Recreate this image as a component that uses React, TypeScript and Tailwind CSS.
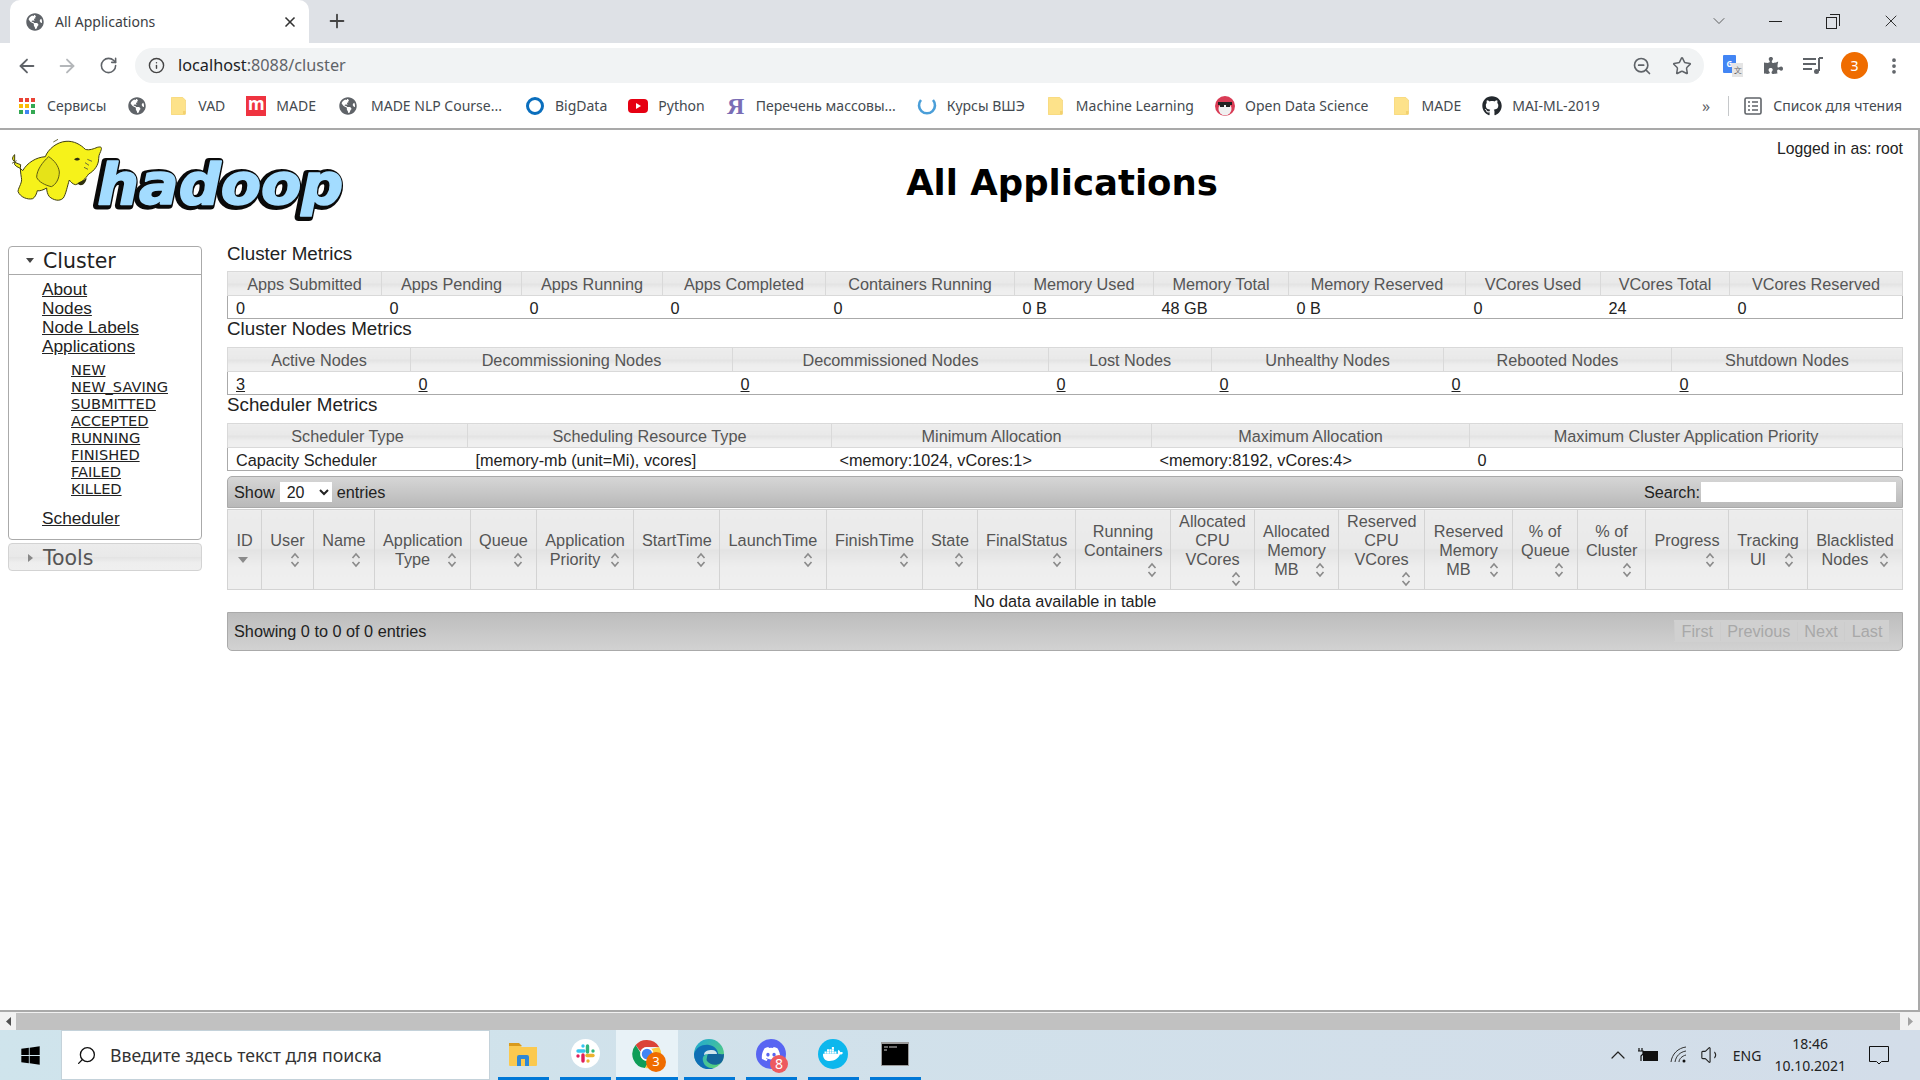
import { ReactNode } from "react";
import {
  ArrowLeft,
  ArrowRight,
  ChevronDown,
  ChevronUp,
  Info,
  MoreVertical,
  Plus,
  RotateCw,
  Search,
  Star,
  Volume1,
  X,
  ZoomOut,
} from "lucide-react";
import { FaDiscord, FaDocker, FaGithub, FaGlobeAmericas, FaPuzzlePiece, FaWindows } from "react-icons/fa";

interface MetricCol {
  label: string;
  width: string;
  value: string;
  link?: boolean;
}

interface SortCol {
  label: string;
  width: string;
  active?: boolean;
}

const clusterMetrics: MetricCol[] = [
  { label: "Apps Submitted", width: "w-[154px]", value: "0" },
  { label: "Apps Pending", width: "w-[140px]", value: "0" },
  { label: "Apps Running", width: "w-[141px]", value: "0" },
  { label: "Apps Completed", width: "w-[163px]", value: "0" },
  { label: "Containers Running", width: "w-[189px]", value: "0" },
  { label: "Memory Used", width: "w-[139px]", value: "0 B" },
  { label: "Memory Total", width: "w-[135px]", value: "48 GB" },
  { label: "Memory Reserved", width: "w-[177px]", value: "0 B" },
  { label: "VCores Used", width: "w-[135px]", value: "0" },
  { label: "VCores Total", width: "w-[129px]", value: "24" },
  { label: "VCores Reserved", width: "w-[173px]", value: "0" },
];

const nodeMetrics: MetricCol[] = [
  { label: "Active Nodes", width: "w-[183px]", value: "3", link: true },
  { label: "Decommissioning Nodes", width: "w-[322px]", value: "0", link: true },
  { label: "Decommissioned Nodes", width: "w-[316px]", value: "0", link: true },
  { label: "Lost Nodes", width: "w-[163px]", value: "0", link: true },
  { label: "Unhealthy Nodes", width: "w-[232px]", value: "0", link: true },
  { label: "Rebooted Nodes", width: "w-[228px]", value: "0", link: true },
  { label: "Shutdown Nodes", width: "w-[231px]", value: "0", link: true },
];

const schedulerMetrics: MetricCol[] = [
  { label: "Scheduler Type", width: "w-[240px]", value: "Capacity Scheduler" },
  { label: "Scheduling Resource Type", width: "w-[364px]", value: "[memory-mb (unit=Mi), vcores]" },
  { label: "Minimum Allocation", width: "w-[320px]", value: "<memory:1024, vCores:1>" },
  { label: "Maximum Allocation", width: "w-[318px]", value: "<memory:8192, vCores:4>" },
  { label: "Maximum Cluster Application Priority", width: "w-[433px]", value: "0" },
];

const appCols: SortCol[] = [
  { label: "ID", width: "w-[34px]", active: true },
  { label: "User", width: "w-[52px]" },
  { label: "Name", width: "w-[61px]" },
  { label: "Application Type", width: "w-[96px]" },
  { label: "Queue", width: "w-[66px]" },
  { label: "Application Priority", width: "w-[97px]" },
  { label: "StartTime", width: "w-[86px]" },
  { label: "LaunchTime", width: "w-[107px]" },
  { label: "FinishTime", width: "w-[96px]" },
  { label: "State", width: "w-[55px]" },
  { label: "FinalStatus", width: "w-[98px]" },
  { label: "Running Containers", width: "w-[95px]" },
  { label: "Allocated CPU VCores", width: "w-[84px]" },
  { label: "Allocated Memory MB", width: "w-[84px]" },
  { label: "Reserved CPU VCores", width: "w-[86px]" },
  { label: "Reserved Memory MB", width: "w-[88px]" },
  { label: "% of Queue", width: "w-[65px]" },
  { label: "% of Cluster", width: "w-[68px]" },
  { label: "Progress", width: "w-[83px]" },
  { label: "Tracking UI", width: "w-[79px]" },
  { label: "Blacklisted Nodes", width: "w-[95px]" },
];

const thBg =
  "bg-[linear-gradient(#ececec_0%,#e9e9e9_48%,#e3e3e3_50%,#eeeeee_72%,#efefef_100%)]";

function Folder() {
  return (
    <svg width="15" height="18" viewBox="0 0 15 18" className="shrink-0">
      <path d="M1.5 0h9.5l3.5 3v13.5a1.5 1.5 0 0 1-1.5 1.5h-11.5a1.5 1.5 0 0 1-1.5-1.5v-15a1.5 1.5 0 0 1 1.5-1.5z" fill="#fde28a" stroke="#f0cf6c" strokeWidth="0.6" />
      <path d="M12 14h2.5v3h-2.5z" fill="#f3d16e" />
    </svg>
  );
}

function Globe() {
  return <FaGlobeAmericas size={18} className="shrink-0 text-[#5f6368]" />;
}

function AppsGrid() {
  const colors = ["#ea4335", "#ea4335", "#ea4335", "#fbbc04", "#fbbc04", "#34a853", "#34a853", "#4285f4", "#34a853"];
  return (
    <div className="grid shrink-0 grid-cols-3 gap-[2px]">
      {colors.map((c, i) => (
        <svg key={i} width="4" height="4" className="block">
          <rect width="4" height="4" fill={c} />
        </svg>
      ))}
    </div>
  );
}

function Bookmark({ icon, label, className, labelClass }: { icon: ReactNode; label?: string; className?: string; labelClass?: string }) {
  return (
    <div className={`flex shrink-0 items-center ${className ?? ""}`}>
      <div className="flex w-[20px] items-center justify-center">{icon}</div>
      {label && <span className={`whitespace-nowrap ${labelClass ?? "ml-[10px]"}`}>{label}</span>}
    </div>
  );
}

function HadoopLogo() {
  const letters = {
    x: 292,
    y: 222,
    textLength: 738,
    lengthAdjust: "spacingAndGlyphs" as const,
    fontFamily: "'DejaVu Sans', sans-serif",
    fontWeight: 700,
    fontStyle: "italic",
    fontSize: 172,
    strokeLinejoin: "round" as const,
  };
  return (
    <svg width="360" height="100" viewBox="0 0 1080 300" className="block">
      <text {...letters} x={286} y={226} fill="#0a0a0a" stroke="#0a0a0a" strokeWidth="24">
        hadoop
      </text>
      <text {...letters} fill="#a3dcff" stroke="#a3dcff" strokeWidth="5">
        hadoop
      </text>
      <path
        d="M44 104c8 10 18 8 24 18 14-24 40-40 68-42 8-22 34-44 62-46 24-2 44 10 58 24 12 4 26-2 36-6 8-2 14-2 12 6-2 10-8 14-8 28 0 18-12 36-30 46-10 14-22 28-40 32-8-2-14-8-18-14-6 18-10 42-18 54-12 12-30 6-42-4-6-8-8-18-8-26-10 6-22 10-28 8-2 8-6 20-14 24-14 4-38-4-44-22 2-14 14-26 10-42-2-12-4-26-2-38-10-4-20-6-24-16-2-4 4-14 6-14z"
        fill="#f6f21a"
        stroke="#3e3d12"
        strokeWidth="3"
      />
      <path d="M146 80c-18 16-36 40-36 62 6 14 26 24 44 28 14-6 24-24 24-44-2-18-14-34-32-46z" fill="#e6e318" stroke="#5e5c15" strokeWidth="3" />
      <path d="M222 88c6-6 14-6 18 0-4 4-12 6-18 0zM232 160c8-6 18-8 28-16-2 16-16 30-28 16z" fill="#30300e" />
      <path d="M255 98l12 8M262 88l14 6M252 112l12 6M160 36l14-8M36 100l14-8" stroke="#6a6a3a" strokeWidth="3" fill="none" />
    </svg>
  );
}

function SortIcon({ active }: { active?: boolean }) {
  return (
    <span className="float-right flex h-[20px] w-[20px] items-center justify-center">
      {active ? (
        <svg width="10" height="6" viewBox="0 0 10 6">
          <path d="M0 0h10L5 6z" fill="#8a8a8a" />
        </svg>
      ) : (
        <svg width="10" height="16" viewBox="0 0 10 16" fill="none" stroke="#8a8a8a" strokeWidth="1.6">
          <path d="M1.5 6L5 2l3.5 4M1.5 10L5 14l3.5-4" />
        </svg>
      )}
    </span>
  );
}

function MetricsTable({ cols }: { cols: MetricCol[] }) {
  return (
    <table className="w-full table-fixed border-collapse">
      <colgroup>
        {cols.map((col) => (
          <col key={col.label} className={col.width} />
        ))}
      </colgroup>
      <thead>
        <tr>
          {cols.map((col) => (
            <th
              key={col.label}
              className={`h-[24px] border border-[#d9d9d9] px-0 pb-0 pt-[2px] text-center font-normal text-[#555555] ${thBg}`}
            >
              {col.label}
            </th>
          ))}
        </tr>
      </thead>
      <tbody>
        <tr>
          {cols.map((col, i) => (
            <td
              key={col.label}
              className={`h-[23px] border-b border-b-[#aaaaaa] px-2 pb-0 pt-[3px] ${i === 0 ? "border-l border-l-[#aaaaaa]" : ""} ${i === cols.length - 1 ? "border-r border-r-[#aaaaaa]" : ""}`}
            >
              {col.link ? <a className="underline">{col.value}</a> : col.value}
            </td>
          ))}
        </tr>
      </tbody>
    </table>
  );
}

function ChromeBar() {
  return (
    <div className="font-['Noto_Sans',sans-serif] text-[#3c4043]">
      <div className="flex h-[43px] items-end bg-[#dee1e6]">
        <div className="ml-[10px] flex h-[43px] w-[299px] items-center rounded-t-[10px] bg-white pl-[16px] text-[14px]">
          <FaGlobeAmericas size={18} className="text-[#5f6368]" />
          <span className="ml-[11px] flex-1">All Applications</span>
          <X size={16} strokeWidth={2.5} className="mr-[11px] text-[#333333]" />
        </div>
        <div className="mb-[11px] ml-[17px] text-[#444444]">
          <Plus size={22} strokeWidth={2} />
        </div>
        <div className="mb-[12px] ml-auto flex items-center text-[#444444]">
          <ChevronDown size={20} strokeWidth={1} className="mr-[40px]" />
          <div className="mr-[44px] h-px w-[13px] bg-[#222222]" />
          <div className="relative mr-[41px] h-[15px] w-[14px]">
            <div className="absolute bottom-0 left-0 h-[12px] w-[11px] border-[1.5px] border-[#222222]" />
            <div className="absolute right-0 top-0 h-[12px] w-[10px] border-r-[1.5px] border-t-[1.5px] border-[#222222]" />
          </div>
          <X size={20} strokeWidth={1.1} className="mr-[19px] text-[#222222]" />
        </div>
      </div>
      <div className="flex h-[45px] items-center bg-white">
        <ArrowLeft size={22} strokeWidth={2} className="ml-[16px] text-[#5f6368]" />
        <ArrowRight size={22} strokeWidth={2} className="ml-[18px] text-[#b4b7ba]" />
        <RotateCw size={19} strokeWidth={2} className="ml-[21px] text-[#5f6368]" />
        <div className="ml-[17px] flex h-[35px] w-[1569px] items-center rounded-full bg-[#f1f3f4] pl-[13px] pr-[10px]">
          <Info size={17} strokeWidth={2} className="text-[#444444]" />
          <span className="ml-[13px] text-[16.25px] text-[#202124]">
            localhost<span className="text-[#5f6368]">:8088/cluster</span>
          </span>
          <ZoomOut size={20} strokeWidth={2} className="ml-auto mr-[20px] text-[#5f6368]" />
          <Star size={20} strokeWidth={1.8} className="mr-[2px] text-[#5f6368]" />
        </div>
        <div className="relative ml-[19px] h-[22px] w-[20px]">
          <div className="absolute left-0 top-0 flex h-[18px] w-[13px] items-center justify-center rounded-[1px] bg-[#4285f4] text-[8px] font-bold text-white">
            G
          </div>
          <div className="absolute bottom-0 right-0 flex h-[14px] w-[11px] items-center justify-center bg-[#e5e5e5] text-[8px] text-[#666666]">
            文
          </div>
        </div>
        <FaPuzzlePiece size={19} className="ml-[21px] text-[#5f6368]" />
        <svg width="22" height="20" viewBox="0 0 22 20" className="ml-[19px]" fill="none" stroke="#5f6368" strokeWidth="2">
          <path d="M1 3h13M1 8h13M1 13h9M17 2v13" />
          <circle cx="14.5" cy="15.5" r="2.5" fill="#5f6368" stroke="none" />
          <path d="M17 2h4" />
        </svg>
        <div className="ml-[17px] flex h-[27px] w-[27px] items-center justify-center rounded-full bg-[#ef6c00] text-[14px] text-white">
          З
        </div>
        <MoreVertical size={20} strokeWidth={2.5} className="ml-[16px] text-[#5f6368]" />
      </div>
      <div className="flex h-[42px] items-center gap-[21px] border-b-2 border-b-[#a9a9a9] bg-white pb-[5px] pl-[17px] text-[14px] text-[#444a50]">
        <Bookmark icon={<AppsGrid />} label="Сервисы" />
        <Bookmark icon={<Globe />} />
        <Bookmark icon={<Folder />} label="VAD" />
        <Bookmark
          icon={
            <div className="flex h-[20px] w-[20px] items-center justify-center bg-[#ef3340] pb-[3px] text-[17px] font-bold text-white">
              m
            </div>
          }
          label="MADE"
        />
        <Bookmark icon={<Globe />} label="MADE NLP Course..." className="ml-px mr-[2px]" labelClass="ml-[13px]" />
        <Bookmark
          icon={
            <svg width="20" height="20" viewBox="0 0 20 20" fill="none">
              <circle cx="10" cy="10" r="7.5" stroke="#0a6ebd" strokeWidth="3" />
            </svg>
          }
          label="BigData"
        />
        <Bookmark
          icon={
            <svg width="20" height="16" viewBox="0 0 20 16">
              <rect width="20" height="14" y="1" rx="4" fill="#e60012" />
              <path d="M8 5l5 3-5 3z" fill="#ffffff" />
            </svg>
          }
          label="Python"
        />
        <Bookmark
          icon={
            <span className="w-[20px] text-center font-['Liberation_Serif',serif] text-[24px] font-bold leading-none text-[#7a6db5]">
              Я
            </span>
          }
          label="Перечень массовы..."
        />
        <Bookmark
          icon={
            <svg width="20" height="20" viewBox="0 0 20 20" fill="none">
              <path d="M4 4a8 8 0 1 0 12 0" stroke="#4a9ed8" strokeWidth="2.6" />
            </svg>
          }
          label="Курсы ВШЭ"
        />
        <Bookmark icon={<Folder />} label="Machine Learning" />
        <Bookmark
          icon={
            <svg width="20" height="20" viewBox="0 0 20 20">
              <circle cx="10" cy="10" r="10" fill="#d93b55" />
              <circle cx="10" cy="13" r="6.5" fill="#f0f0f0" />
              <rect x="3" y="6" width="14" height="3" fill="#222222" />
              <rect x="5" y="8" width="4" height="3" fill="#222222" />
              <rect x="11" y="8" width="4" height="3" fill="#222222" />
            </svg>
          }
          label="Open Data Science"
          className="mr-[2px]"
        />
        <Bookmark icon={<Folder />} label="MADE" />
        <Bookmark icon={<FaGithub size={20} className="text-[#24292e]" />} label="MAI-ML-2019" />
        <span className="ml-auto text-[16px] text-[#5f6368]">»</span>
        <div className="ml-[-3px] h-[20px] w-px bg-[#c6c8ca]" />
        <div className="ml-[-6px] mr-[18px] flex items-center">
          <svg width="18" height="18" viewBox="0 0 18 18" fill="none" stroke="#5f6368" strokeWidth="1.6">
            <rect x="1" y="1" width="16" height="16" rx="1.5" />
            <path d="M4 5h2M8 5h6M4 9h2M8 9h6M4 13h2M8 13h6" />
          </svg>
          <span className="ml-[11px] whitespace-nowrap">Список для чтения</span>
        </div>
      </div>
    </div>
  );
}

function Sidebar() {
  const states = ["NEW", "NEW_SAVING", "SUBMITTED", "ACCEPTED", "RUNNING", "FINISHED", "FAILED", "KILLED"];
  return (
    <div className="w-[194px] shrink-0 font-['DejaVu_Sans',sans-serif] text-[#222222]">
      <div className="h-[294px] rounded-[4px] border border-[#aaaaaa]">
        <div className="flex h-[28px] items-center border-b border-b-[#aaaaaa] pl-[17px] pt-[2px] text-[20.5px]">
          <svg width="8" height="5" viewBox="0 0 8 5" className="mb-[3px]">
            <path d="M0 0h8L4 5z" fill="#444444" />
          </svg>
          <span className="ml-[9px]">Cluster</span>
        </div>
        <div className="pl-[33px] pt-[5px] font-['Liberation_Sans',sans-serif] text-[17.25px] leading-[19px]">
          {["About", "Nodes", "Node Labels", "Applications"].map((item) => (
            <div key={item}>
              <a className="underline">{item}</a>
            </div>
          ))}
          <div className="pl-[29px] pt-[5px] font-['DejaVu_Sans',sans-serif] text-[14.6px] leading-[17px] text-[#222222]">
            {states.map((state) => (
              <div key={state}>
                <a className="underline">{state}</a>
              </div>
            ))}
          </div>
          <div className="pt-[12px]">
            <a className="underline">Scheduler</a>
          </div>
        </div>
      </div>
      <div className={`mt-[3px] flex h-[28px] items-center rounded-[4px] border border-[#d3d3d3] pl-[19px] pt-[2px] text-[20.5px] text-[#555555] ${thBg}`}>
        <svg width="5" height="8" viewBox="0 0 5 8">
          <path d="M0 0l5 4-5 4z" fill="#888888" />
        </svg>
        <span className="ml-[10px]">Tools</span>
      </div>
    </div>
  );
}

function AppsTable() {
  return (
    <div className="mt-[5px]">
      <div className="flex h-[32px] items-center rounded-t-[5px] border border-[#aaaaaa] bg-linear-to-b from-[#d6d6d6] to-[#b9b9b9] pl-[6px] pr-[6px]">
        <span>Show</span>
        <select className="ml-[5px] h-[20px] w-[52px] bg-white pl-[3px] text-[16px]" defaultValue="20">
          <option>20</option>
        </select>
        <span className="ml-[5px]">entries</span>
        <span className="ml-auto">Search:</span>
        <input className="ml-[1px] h-[20px] w-[195px] bg-white" />
      </div>
      <table className="mt-px w-full table-fixed border-collapse">
        <colgroup>
          {appCols.map((col) => (
            <col key={col.label} className={col.width} />
          ))}
        </colgroup>
        <thead>
          <tr>
            {appCols.map((col) => (
              <th
                key={col.label}
                className={`h-[80px] border border-[#d3d3d3] px-2 pb-0 pt-[2px] text-center align-middle font-normal text-[#555555] ${thBg}`}
              >
                {col.label}
                <SortIcon active={col.active} />
              </th>
            ))}
          </tr>
        </thead>
        <tbody>
          <tr>
            <td colSpan={appCols.length} className="h-[22px] pb-0 pt-[2px] text-center">
              No data available in table
            </td>
          </tr>
        </tbody>
      </table>
      <div className="flex h-[39px] items-center justify-between rounded-b-[5px] border border-[#aaaaaa] bg-linear-to-b from-[#bdbdbd] to-[#d2d2d2] pl-[6px] pr-[13px]">
        <span>Showing 0 to 0 of 0 entries</span>
        <div className="flex h-[22px] items-center bg-[#d0d0d0] text-[#a8a8a8]">
          {["First", "Previous", "Next", "Last"].map((label) => (
            <span key={label} className="border-l border-l-[#cccccc] px-[6.5px]">
              {label}
            </span>
          ))}
        </div>
      </div>
    </div>
  );
}

function ChromeIcon() {
  return (
    <div className="relative h-[30px] w-[30px]">
      <svg width="30" height="30" viewBox="0 0 30 30">
        <path d="M15 1a14 14 0 0 1 12.1 7H15a7 7 0 0 0-6.6 4.6L3.6 6.1A14 14 0 0 1 15 1z" fill="#db4437" />
        <path d="M3.6 6.1l4.9 7.6a7 7 0 0 0 8.7 8.1L13 29A14 14 0 0 1 3.6 6.1z" fill="#0f9d58" />
        <path d="M27.1 8a14 14 0 0 1-14.1 21l6-9.5A7 7 0 0 0 19 10z" fill="#ffcd40" />
        <circle cx="15" cy="15" r="6" fill="#4285f4" stroke="#ffffff" strokeWidth="1.5" />
      </svg>
      <div className="absolute bottom-[-3px] right-[-4px] flex h-[20px] w-[20px] items-center justify-center rounded-full bg-[#ef6c00] text-[13px] text-white">
        3
      </div>
    </div>
  );
}

function Taskbar() {
  const slots: ReactNode[] = [
    <svg key="files" width="28" height="24" viewBox="0 0 28 24">
      <path d="M0 3a1 1 0 0 1 1-1h9l3 3h15v18a1 1 0 0 1-1 1H1a1 1 0 0 1-1-1z" fill="#fbc94f" />
      <path d="M0 1h10l3 3H0z" fill="#d99a1c" />
      <path d="M8 24v-9a2 2 0 0 1 2-2h8a2 2 0 0 1 2 2v9h-4v-7h-4v7z" fill="#2f88d6" />
    </svg>,
    <div key="slack" className="flex h-[29px] w-[29px] items-center justify-center rounded-full bg-white">
      <svg width="19" height="19" viewBox="0 0 19 19" fill="none" strokeWidth="3.4" strokeLinecap="round">
        <path d="M2 7h6" stroke="#36c5f0" />
        <path d="M7 2v0" stroke="#36c5f0" />
        <path d="M11.5 2v6" stroke="#2eb67d" />
        <path d="M17 7v0" stroke="#2eb67d" />
        <path d="M11 11.5h6" stroke="#ecb22e" />
        <path d="M12 17v0" stroke="#ecb22e" />
        <path d="M7 11v6" stroke="#e01e5a" />
        <path d="M2 12v0" stroke="#e01e5a" />
      </svg>
    </div>,
    <ChromeIcon key="chrome" />,
    <svg key="edge" width="30" height="30" viewBox="0 0 30 30">
      <defs>
        <linearGradient id="edgeTop" x1="0" y1="0" x2="1" y2="1">
          <stop offset="0" stopColor="#1ea7d8" />
          <stop offset="1" stopColor="#62d66a" />
        </linearGradient>
      </defs>
      <circle cx="15" cy="15" r="15" fill="url(#edgeTop)" />
      <path d="M0 15C2 8 9 5 15 6c6 1 9 5 9 9h-9c-5 0-7 3-6 7 1 5 6 8 12 7a15 15 0 0 1-21-14z" fill="#0f6fb5" />
      <path d="M13 18c0-3 3-5 7-4 4 0 6 2 10 1 0 4-1 7-3 9-5 3-11 2-14-2-1-1-0-3 0-4z" fill="#0d5a9c" opacity="0.9" />
      <path d="M10 16c0-4 4-5 8-5 3 0 5 2 5 4h-8c-2 0-3 0-5 1z" fill="#d1e4ec" />
    </svg>,
    <div key="discord" className="relative flex h-[30px] w-[30px] items-center justify-center rounded-full bg-[#5865f2]">
      <FaDiscord size={20} className="text-white" />
      <div className="absolute bottom-[-4px] right-[-2px] flex h-[18px] w-[18px] items-center justify-center rounded-full bg-[#ed5a5f] text-[14px] text-white">
        8
      </div>
    </div>,
    <div key="docker" className="flex h-[30px] w-[30px] items-center justify-center rounded-full bg-[#0db7ed]">
      <FaDocker size={20} className="text-white" />
    </div>,
    <svg key="terminal" width="28" height="24" viewBox="0 0 28 24">
      <rect width="28" height="24" fill="#9a9a9a" />
      <rect x="1" y="2" width="26" height="21" fill="#000000" />
      <path d="M3 5h4M8 5h8M3 8h3" stroke="#cfcfcf" strokeWidth="1" />
    </svg>,
  ];
  return (
    <div className="flex h-[50px] items-stretch bg-linear-to-r from-[#cfe4ec] to-[#d3dde9] font-['Noto_Sans',sans-serif]">
      <div className="flex w-[61px] items-center justify-center">
        <FaWindows size={21} className="text-black" />
      </div>
      <div className="flex w-[429px] items-center border border-[#c4d2da] bg-white pl-[14px] text-[17.7px] text-[#333333]">
        <Search size={21} strokeWidth={1.5} className="-scale-x-100 text-[#111111]" />
        <span className="ml-[13px]">Введите здесь текст для поиска</span>
      </div>
      <div className="ml-[2px] flex">
        {slots.map((icon, i) => (
          <div key={i} className={`flex w-[62px] flex-col items-center ${i === 2 ? "bg-[#e8f2f7]" : ""}`}>
            <div className="flex flex-1 items-center justify-center">{icon}</div>
            <div className={`h-[3px] bg-[#0078d7] ${i === 2 ? "w-full" : "w-[51px]"}`} />
          </div>
        ))}
      </div>
      <div className="ml-auto flex items-center text-[#222222]">
        <ChevronUp size={24} strokeWidth={1.2} className="mr-[8px]" />
        <svg width="20" height="14" viewBox="0 0 20 14" className="mr-[12px]">
          <rect x="5" y="3" width="15" height="10" fill="#111111" />
          <path d="M1 0v3M4 0v3M0 3h5v3l-2 2v5" stroke="#111111" strokeWidth="1.2" fill="none" />
        </svg>
        <svg width="18" height="18" viewBox="0 0 18 18" fill="none" stroke="#333333" strokeWidth="1" className="mr-[12px]">
          <path d="M1 16C2 8 8 2 16 1M5 16C6 10 10 6 16 5M9 16c0-3 3-6 7-7" />
          <circle cx="14" cy="15" r="1.5" fill="#111111" stroke="none" />
        </svg>
        <Volume1 size={22} strokeWidth={1.2} className="mr-[11px]" />
        <span className="mr-[13px] text-[14px]">ENG</span>
        <div className="mr-[23px] text-center text-[14px] leading-[22px]">
          <div>18:46</div>
          <div>10.10.2021</div>
        </div>
        <svg width="20" height="20" viewBox="0 0 20 20" fill="none" stroke="#111111" strokeWidth="1" className="mr-[31px]">
          <path d="M.5 1.5h19v15h-7l-2.5 2.5-2.5-2.5h-7z" />
        </svg>
      </div>
    </div>
  );
}

function HScrollbar() {
  return (
    <div className="flex h-[20px] items-stretch border-t-2 border-t-[#a9a9a9] bg-[#f1f1f1] pt-px">
      <div className="flex w-[16px] items-center justify-center">
        <svg width="5" height="9" viewBox="0 0 5 9">
          <path d="M5 0L0 4.5 5 9z" fill="#505050" />
        </svg>
      </div>
      <div className="flex-1 bg-[#c1c1c1]" />
      <div className="flex w-[20px] items-center justify-center">
        <svg width="5" height="9" viewBox="0 0 5 9">
          <path d="M0 0l5 4.5L0 9z" fill="#a3a3a3" />
        </svg>
      </div>
    </div>
  );
}

export default function App() {
  return (
    <div className="flex h-[1080px] w-[1920px] flex-col overflow-hidden bg-white">
      <ChromeBar />
      <div className="flex-1 border-r-[2px] border-r-[#a9a9a9] font-['Liberation_Sans',sans-serif] text-[16.25px] leading-[19px] text-[#222222]">
        <div className="relative h-[116px]">
          <HadoopLogo />
          <h1 className="absolute left-[206px] right-[0px] top-[31px] text-center font-['DejaVu_Sans',sans-serif] text-[35.5px] font-bold leading-[44px] text-black">
            All Applications
          </h1>
          <span className="absolute right-[15px] top-[9px] text-[15.75px]">Logged in as: root</span>
        </div>
        <div className="flex gap-[25px] pl-[8px] pr-[15px]">
          <Sidebar />
          <div className="min-w-0 flex-1">
            <h3 className="flex h-[25px] items-center pb-[10px] text-[18.8px]">Cluster Metrics</h3>
            <MetricsTable cols={clusterMetrics} />
            <h3 className="flex h-[28px] items-center pb-[10px] text-[18.8px]">Cluster Nodes Metrics</h3>
            <MetricsTable cols={nodeMetrics} />
            <h3 className="flex h-[28px] items-center pb-[10px] text-[18.8px]">Scheduler Metrics</h3>
            <MetricsTable cols={schedulerMetrics} />
            <AppsTable />
          </div>
        </div>
      </div>
      <HScrollbar />
      <Taskbar />
    </div>
  );
}
